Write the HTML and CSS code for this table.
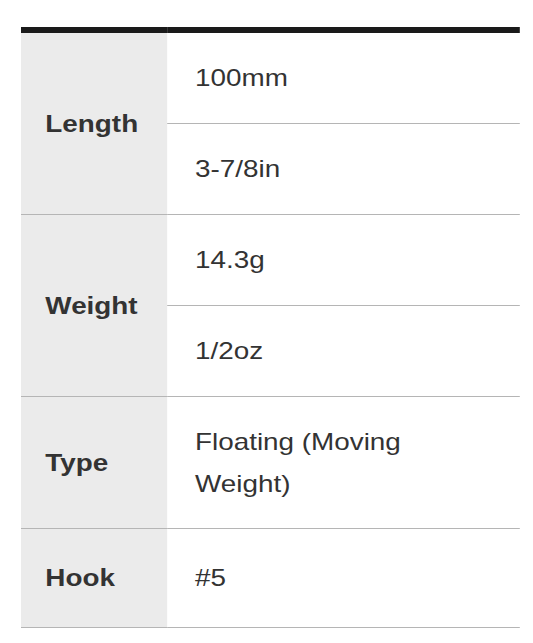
FILE: index.html
```
<!DOCTYPE html>
<html>
<head>
<meta charset="utf-8">
<link rel="stylesheet" href="styles.css">
</head>
<body>
<div class="stretch">
<table class="spec">
  <tbody>
    <tr>
      <th class="label" rowspan="2">Length</th>
      <td class="value">100mm</td>
    </tr>
    <tr>
      <td class="value">3-7/8in</td>
    </tr>
    <tr>
      <th class="label" rowspan="2">Weight</th>
      <td class="value">14.3g</td>
    </tr>
    <tr>
      <td class="value">1/2oz</td>
    </tr>
    <tr>
      <th class="label">Type</th>
      <td class="value multi"><span class="wrap">Floating (Moving Weight)</span></td>
    </tr>
    <tr>
      <th class="label">Hook</th>
      <td class="value tall">#5</td>
    </tr>
  </tbody>
</table>
</div>
</body>
</html>
```
FILE: styles.css
```
html, body {
  margin: 0;
  padding: 0;
  background: #ffffff;
}

body {
  padding: 27px 0 0 21px;
  font-family: "Liberation Sans", Arial, sans-serif;
  color: #333333;
}

.stretch {
  width: 430px;
  transform: scaleX(1.16);
  transform-origin: 0 0;
}

.spec {
  width: 430px;
  border-collapse: collapse;
  border-top: 6px solid #1a1a1a;
}

.label {
  width: 126px;
  box-sizing: border-box;
  background: #ebebeb;
  text-align: left;
  padding: 0 0 0 21px;
  font-size: 24px;
  font-weight: bold;
  line-height: 42px;
  vertical-align: middle;
  border-bottom: 1px solid #b5b5b5;
}

.value {
  padding: 24px 16px 24px 24px;
  font-size: 24px;
  line-height: 42px;
  border-bottom: 1px solid #b5b5b5;
  vertical-align: top;
}

.value.multi {
  padding-bottom: 23px;
}

.value.tall {
  padding: 28px 16px 28px 24px;
}

.wrap {
  display: inline-block;
  max-width: 200px;
}
```
